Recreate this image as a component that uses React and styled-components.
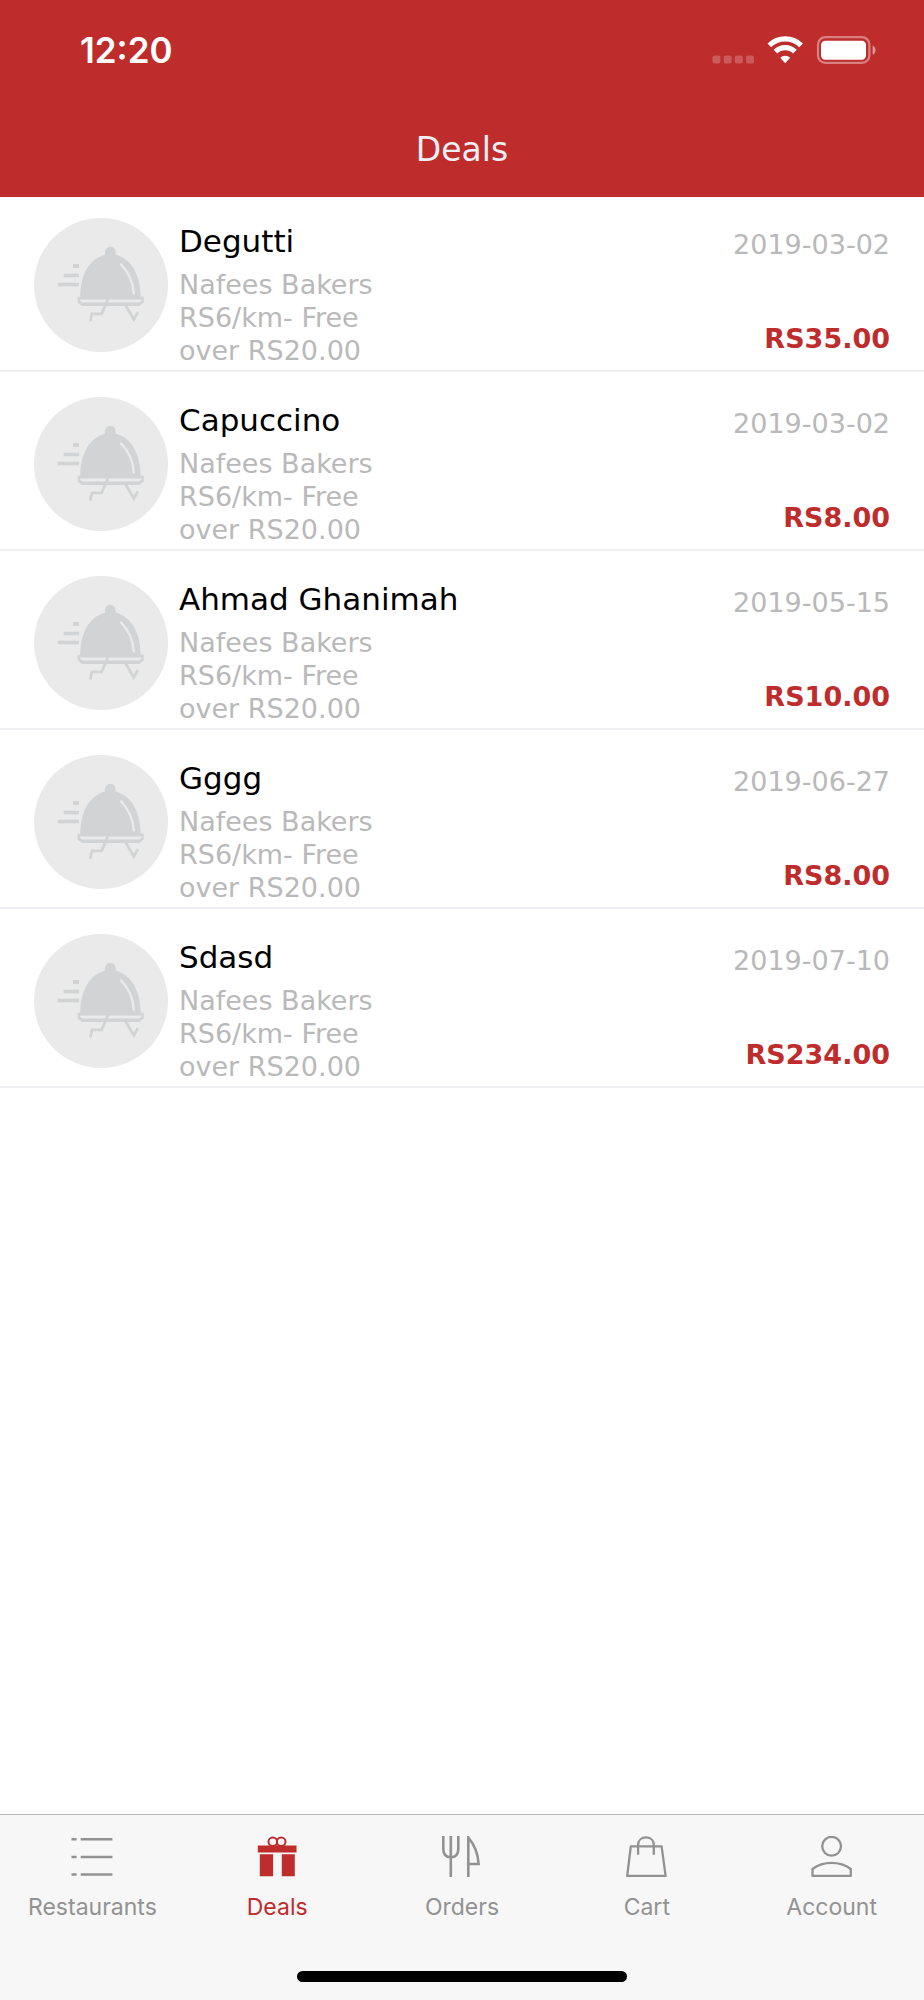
import React from 'react'
import styled, { createGlobalStyle } from 'styled-components'

const GlobalStyle = createGlobalStyle`
  * {
    box-sizing: border-box;
  }
  body {
    margin: 0;
    background: #fff;
    font-family: 'DejaVu Sans', Verdana, sans-serif;
  }
`

const Screen = styled.div`
  display: flex;
  flex-direction: column;
  min-height: 100vh;
`

const Header = styled.header`
  background: #be2c2c;
  color: #f0eff5;
`

const StatusBar = styled.div`
  display: flex;
  align-items: center;
  justify-content: space-between;
  height: 100px;
  padding: 0 48px 0 80px;
`

const Time = styled.time`
  color: #fff;
  font-family: Inter, sans-serif;
  font-size: 35px;
  font-weight: 600;
  line-height: 42px;
`

const StatusIcons = styled.div`
  display: flex;
  align-items: center;
`

const HeaderTitle = styled.h1`
  margin: 0;
  padding: 30px 0 27px;
  font-size: 33px;
  font-weight: 400;
  line-height: 40px;
  text-align: center;
`

const DealList = styled.ul`
  flex: 1;
  margin: 0;
  padding: 0;
  list-style: none;
`

const DealRow = styled.li`
  display: flex;
  gap: 11px;
  padding: 25px 34px 0;
  border-bottom: 2px solid #efeff4;

  &:first-child {
    padding-top: 21px;
  }
`

const Avatar = styled.svg`
  flex: none;
  width: 134px;
  height: 134px;
`

const DealInfo = styled.div`
  flex: 1;
  padding-bottom: 3px;
`

const DealName = styled.h2`
  margin: 0;
  padding: 3px 0 7px;
  color: #000;
  font-size: 31px;
  font-weight: 400;
  line-height: 40px;
`

const DealText = styled.p`
  margin: 0;
  color: #b9b9b9;
  font-size: 27px;
  line-height: 33px;
`

const DealSide = styled.div`
  display: flex;
  flex-direction: column;
  justify-content: space-between;
  padding: 10px 0 15px;
  text-align: right;
`

const Price = styled.strong`
  color: #be2c2c;
  font-size: 27px;
  font-weight: 700;
  line-height: 33px;
`

const TabBar = styled.nav`
  background: #f7f7f7;
  border-top: 1px solid #b4b4b4;
`

const Tabs = styled.div`
  display: grid;
  grid-template-columns: repeat(5, 1fr);
  padding-top: 21px;
`

const Tab = styled.a`
  display: flex;
  flex-direction: column;
  align-items: center;
  gap: 15px;
  color: ${({ $active }) => ($active ? '#be2c2c' : '#929292')};
  font-family: Inter, sans-serif;
  font-size: 23px;
  font-weight: 400;
  line-height: 28px;
  text-decoration: none;

  svg {
    width: 42px;
    height: 42px;
    fill: none;
    stroke: currentColor;
    stroke-width: 2.6;
  }
`

const HomeIndicator = styled.div`
  width: 330px;
  height: 11px;
  margin: 50px auto 18px;
  border-radius: 6px;
  background: #000;
`

const deals = [
  { name: 'Degutti', date: '2019-03-02', price: 'RS35.00' },
  { name: 'Capuccino', date: '2019-03-02', price: 'RS8.00' },
  { name: 'Ahmad Ghanimah', date: '2019-05-15', price: 'RS10.00' },
  { name: 'Gggg', date: '2019-06-27', price: 'RS8.00' },
  { name: 'Sdasd', date: '2019-07-10', price: 'RS234.00' },
]

const StatusSymbols = () => (
  <svg width="166" height="30" viewBox="0 0 166 30" aria-hidden="true">
    <g fill="#fff" fillOpacity=".22">
      <rect x="2.5" y="20.5" width="8" height="8" rx="2" />
      <rect x="13.7" y="20.5" width="8" height="8" rx="2" />
      <rect x="24.8" y="20.5" width="8" height="8" rx="2" />
      <rect x="36" y="20.5" width="8" height="8" rx="2" />
    </g>
    <g fill="none" stroke="#fff" strokeWidth="5.2">
      <path d="M59.3 10.4 A22.6 22.6 0 0 1 91.1 10.4" />
      <path d="M65.5 16.6 A13.8 13.8 0 0 1 84.9 16.6" />
    </g>
    <path d="M70.2 22.8 A7.1 7.1 0 0 1 80.2 22.8 L75.2 28.2 Z" fill="#fff" />
    <rect x="108" y="2.2" width="51.4" height="25.6" rx="7.4" fill="none" stroke="#fff" strokeOpacity=".4" strokeWidth="2.2" />
    <rect x="111" y="5.7" width="45" height="19" rx="4.2" fill="#fff" />
    <path d="M162.6 10.4 C166.6 12 166.6 18.2 162.6 19.8 Z" fill="#fff" fillOpacity=".5" />
  </svg>
)

const Cloche = () => (
  <Avatar viewBox="0 0 134 134" aria-hidden="true">
    <circle cx="67" cy="67" r="67" fill="#eaeaea" />
    <g fill="#d1d3d4">
      <rect x="39" y="46" width="6" height="4" />
      <rect x="29.7" y="55.7" width="15.3" height="3.6" />
      <rect x="23.7" y="64.7" width="21.3" height="3.6" />
      <path d="M46.3 79 C46.3 56 56 40.5 71 36.8 C70.4 32 72.6 28.8 76.3 28.8 C80 28.8 82.3 32 81.7 36.8 C97 40.5 106.3 56 106.7 79 Z" />
      <path d="M43.7 78.7 H109.7 V84.4 L105.2 88 H48 L43.7 84.4 Z" />
    </g>
    <path d="M46 81.5 H107.7 V82.6 L105 84.6 H48.4 L46 82.6 Z" fill="#eaeaea" />
    <path d="M87 46.5 C94.5 54 99 63 99.8 75.5" fill="none" stroke="#eaeaea" strokeWidth="2.4" strokeLinecap="round" />
    <g fill="none" stroke="#d1d3d4" strokeWidth="2.8">
      <path d="M74 81 L67.7 95.8 H57.8 L56.4 103.6" />
      <path d="M91.7 87.5 L99.8 101.4 L103.8 94.2" />
    </g>
  </Avatar>
)

const ListIcon = () => (
  <svg viewBox="0 0 42 42" aria-hidden="true">
    <path d="M.5 3.3 H5.6 M9.7 3.3 H41.4 M.5 21 H5.6 M9.7 21 H41.4 M.5 38.5 H5.6 M9.7 38.5 H41.4" />
  </svg>
)

const GiftIcon = () => (
  <svg viewBox="0 0 42 42" aria-hidden="true">
    <circle cx="16.8" cy="5.8" r="4.3" strokeWidth="2" />
    <circle cx="25.2" cy="5.8" r="4.3" strokeWidth="2" />
    <path
      d="M1.8 9.6 H40.5 V16.4 H1.8 Z M3.8 18.3 H17.1 V40.3 H3.8 Z M25.8 18.3 H38.8 V40.3 H25.8 Z"
      fill="currentColor"
      stroke="none"
    />
  </svg>
)

const CutleryIcon = () => (
  <svg viewBox="0 0 42 42" aria-hidden="true">
    <path d="M2.3 0 V13 C2.3 18.5 5.2 21.2 9.8 21.2 C14.4 21.2 17.3 18.5 17.3 13 V0 M9.8 0 V41" />
    <path d="M27.3 41 V1.5 C32 7 37 17 37.6 28 H27.3" />
  </svg>
)

const BagIcon = () => (
  <svg viewBox="0 0 42 42" aria-hidden="true">
    <path d="M4.8 10.3 H35.6 L39.6 39.9 H1.2 Z" strokeWidth="2.3" strokeLinejoin="round" />
    <path d="M12.1 18.8 V9 C12.1 4.4 15.4 1.4 20 1.4 C24.6 1.4 27.8 4.4 27.8 9 V18.8" strokeWidth="2.3" />
  </svg>
)

const PersonIcon = () => (
  <svg viewBox="0 0 42 42" aria-hidden="true">
    <circle cx="20.6" cy="10.3" r="9.4" strokeWidth="2.3" />
    <path d="M1.5 39.9 V33 C12.3 24.8 28.8 24.8 39.8 33 V39.9 Z" strokeWidth="2.3" strokeLinejoin="round" />
  </svg>
)

const tabs = [
  { label: 'Restaurants', Icon: ListIcon },
  { label: 'Deals', Icon: GiftIcon, active: true },
  { label: 'Orders', Icon: CutleryIcon },
  { label: 'Cart', Icon: BagIcon },
  { label: 'Account', Icon: PersonIcon },
]

const Deal = ({ name, date, price }) => (
  <DealRow>
    <Cloche />
    <DealInfo>
      <DealName>{name}</DealName>
      <DealText>Nafees Bakers</DealText>
      <DealText>
        RS6/km- Free
        <br />
        over RS20.00
      </DealText>
    </DealInfo>
    <DealSide>
      <DealText as="time">{date}</DealText>
      <Price>{price}</Price>
    </DealSide>
  </DealRow>
)

const App = () => (
  <Screen>
    <GlobalStyle />
    <Header>
      <StatusBar>
        <Time>12:20</Time>
        <StatusIcons>
          <StatusSymbols />
        </StatusIcons>
      </StatusBar>
      <HeaderTitle>Deals</HeaderTitle>
    </Header>
    <DealList>
      {deals.map(deal => (
        <Deal key={deal.name} {...deal} />
      ))}
    </DealList>
    <TabBar>
      <Tabs>
        {tabs.map(({ label, Icon, active }) => (
          <Tab key={label} href="#" $active={active} aria-current={active ? 'page' : undefined}>
            <Icon />
            {label}
          </Tab>
        ))}
      </Tabs>
      <HomeIndicator />
    </TabBar>
  </Screen>
)

export default App
